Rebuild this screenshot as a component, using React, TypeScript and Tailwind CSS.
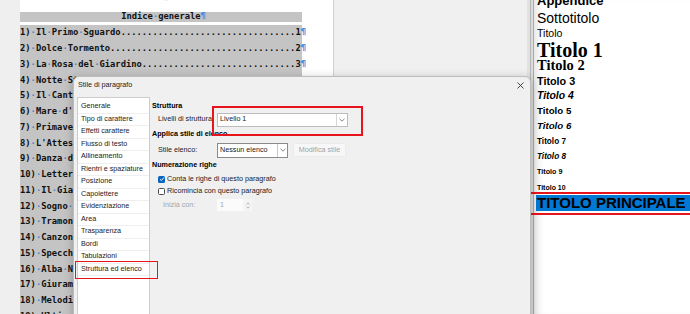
import React from "react";

const rows: [string, string, string][] = [
  ["1)", "Il Primo Sguardo", "1"],
  ["2)", "Dolce Tormento", "2"],
  ["3)", "La Rosa del Giardino", "3"],
  ["4)", "Notte Stellata", "4"],
  ["5)", "Il Canto del Vento", "5"],
  ["6)", "Mare d'Inverno", "6"],
  ["7)", "Primavera", "7"],
  ["8)", "L'Attesa", "8"],
  ["9)", "Danza di Luce", "9"],
  ["10)", "Lettera d'Amore", "10"],
  ["11)", "Il Giardino Segreto", "11"],
  ["12)", "Sogno Lontano", "12"],
  ["13)", "Tramonto", "13"],
  ["14)", "Canzone Antica", "14"],
  ["15)", "Specchio d'Acqua", "15"],
  ["16)", "Alba Nuova", "16"],
  ["17)", "Giuramento", "17"],
  ["18)", "Melodia", "18"],
  ["19)", "Ultimo Addio", "19"],
];

function Marked({ text }: { text: string }) {
  return (
    <>
      {text.split("").map((c, i) =>
        c === " " ? (
          <span key={i} className="text-[#4a86c8]">
            ·
          </span>
        ) : (
          <span key={i}>{c}</span>
        )
      )}
    </>
  );
}

function IndexRow({ n, title, page }: { n: string; title: string; page: string }) {
  const left = `${n} ${title}`;
  const dots = ".".repeat(Math.max(0, 53 - left.length - page.length));
  return (
    <div className="h-[15.75px] shrink-0 bg-[#c4c4c4] flex items-center whitespace-pre">
      <Marked text={left} />
      <span>{dots}</span>
      <span>{page}</span>
      <span className="text-[#3b8fe0]">¶</span>
    </div>
  );
}

function Chevron() {
  return (
    <svg width="6" height="4" viewBox="0 0 6 4">
      <polyline points="0.5,0.8 3,3.2 5.5,0.8" fill="none" stroke="#6b6b6b" strokeWidth="0.8" />
    </svg>
  );
}

const navItems = [
  "Generale",
  "Tipo di carattere",
  "Effetti carattere",
  "Flusso di testo",
  "Allineamento",
  "Rientri e spaziature",
  "Posizione",
  "Capolettere",
  "Evidenziazione",
  "Area",
  "Trasparenza",
  "Bordi",
  "Tabulazioni",
  "Struttura ed elenco",
];

export default function App() {
  return (
    <div className="relative w-[690px] h-[314px] overflow-hidden bg-[#f0f0f0] flex">
      {/* left strip */}
      <div className="w-[20px] shrink-0 bg-[#efefef]" />
      {/* page */}
      <div className="w-[313px] shrink-0 bg-white flex [font-family:'DejaVu_Sans_Mono',monospace] font-bold text-[8.8px] text-[#111]">
        <div className="w-[282px] flex flex-col">
          <div className="h-[12px] shrink-0 overflow-hidden flex justify-center">
            <span className="-mt-[9px] ml-[9px] leading-[12px] text-[#3b8fe0]">¶</span>
          </div>
          <div className="h-[10px] shrink-0 bg-[#c4c4c4] flex items-center justify-center whitespace-pre pl-[5px]">
            <Marked text="Indice generale" />
            <span className="text-[#3b8fe0]">¶</span>
          </div>
          <div className="h-[3px] shrink-0" />
          {rows.map(([n, t, p]) => (
            <IndexRow key={n} n={n} title={t} page={p} />
          ))}
        </div>
      </div>
      <div className="w-[1px] shrink-0 bg-[#d2d2d2]" />
      <div className="w-[193px] shrink-0 bg-[#f0f0f0]" />
      {/* splitter */}
      <div className="w-[7px] shrink-0 flex">
        <div className="w-[3px] bg-[#e2e2e2]" />
        <div className="w-[1px] bg-[#b4b4b4]" />
        <div className="w-[2px] bg-[#dcdcdc]" />
        <div className="w-[1px] bg-[#a9a9a9]" />
      </div>
      {/* sidebar */}
      <div className="flex-1 bg-white shadow-[inset_8px_0_10px_-6px_rgba(0,0,0,0.14)] overflow-hidden text-black [font-family:'Liberation_Sans',Arial,sans-serif]">
        <div className="-mt-[9px] flex flex-col whitespace-nowrap">
          <div className="h-[18.5px] shrink-0 flex items-center pl-[3px] text-[13px] font-bold">Appendice</div>
          <div className="h-[17px] shrink-0 flex items-center pl-[3px] text-[14px]">Sottotitolo</div>
          <div className="h-[15.5px] shrink-0 flex items-center pl-[3px] text-[10.6px]">Titolo</div>
          <div className="h-[15.75px] shrink-0 flex items-center pl-[3px] text-[20px] font-bold [font-family:'Liberation_Serif','Times_New_Roman',serif]">Titolo 1</div>
          <div className="h-[15.25px] shrink-0 flex items-center pl-[3px] text-[14.5px] font-bold [font-family:'Liberation_Serif','Times_New_Roman',serif]">Titolo 2</div>
          <div className="h-[15.25px] shrink-0 flex items-center pl-[3px] text-[10.8px] font-bold">Titolo 3</div>
          <div className="h-[15.25px] shrink-0 flex items-center pl-[3px] text-[10.4px] font-bold italic">Titolo 4</div>
          <div className="h-[15.5px] shrink-0 flex items-center pl-[3px] text-[9.7px] font-bold">Titolo 5</div>
          <div className="h-[15.5px] shrink-0 flex items-center pl-[3px] text-[9.7px] font-bold italic">Titolo 6</div>
          <div className="h-[15px] shrink-0 flex items-center pl-[3px] text-[8.2px] font-bold">Titolo 7</div>
          <div className="h-[15.5px] shrink-0 flex items-center pl-[3px] text-[8.2px] font-bold italic">Titolo 8</div>
          <div className="h-[15.5px] shrink-0 flex items-center pl-[3px] text-[7.2px] font-bold">Titolo 9</div>
          <div className="h-[14.5px] shrink-0 flex items-center pl-[3px] text-[7px] font-bold">Titolo 10</div>
          <div className="h-[16px] shrink-0 ml-[2px] pl-[1px] flex items-center bg-[#0078d4] text-[15px] font-bold">TITOLO PRINCIPALE</div>
        </div>
      </div>

      {/* red box on sidebar */}
      <div className="absolute left-[526px] top-[192px] w-[170px] h-[23px] border-2 border-[#e8141c]" />

      {/* dialog */}
      <div className="absolute left-[73px] top-[76px] w-[458px] h-[250px] bg-[#f0f0f0] border border-[#bdbdbd] rounded-t-[6px] shadow-[0_2px_10px_rgba(0,0,0,0.25)] [font-family:'Liberation_Sans',Arial,sans-serif] text-[7.2px] text-[#1b1b1b]">
        <div className="h-[16px] flex items-center justify-between pl-[4px] pr-[6px]">
          <span>Stile di paragrafo</span>
          <svg width="7" height="7" viewBox="0 0 7 7">
            <path d="M0.5 0.5 L6.5 6.5 M6.5 0.5 L0.5 6.5" stroke="#333" strokeWidth="0.9" />
          </svg>
        </div>
        <div className="mt-[4px] flex">
          <div className="ml-[3px] w-[73px] h-[230px] bg-white border border-[#cdcdcd] pt-[3px] flex flex-col">
            {navItems.map((it) => (
              <div key={it} className="h-[12.5px] shrink-0 border-b border-[#efefef] flex items-center pl-[3px] whitespace-nowrap">
                {it}
              </div>
            ))}
          </div>
          <div className="ml-[2px] flex-1 pt-[3px] flex flex-col">
            <div className="h-[12px] flex items-center font-bold text-black">Struttura</div>
            <div className="h-[15px] flex items-center pl-[6px]">
              <span className="w-[59px] whitespace-nowrap">Livelli di struttura:</span>
              <div className="w-[131px] h-[14px] bg-white border border-[#bcbcbc] flex items-center justify-between pl-[2px]">
                <span>Livello 1</span>
                <div className="w-[11px] h-full border-l border-[#d6d6d6] flex items-center justify-center">
                  <Chevron />
                </div>
              </div>
            </div>
            <div className="h-[14px] flex items-center font-bold text-black">Applica stile di elenco</div>
            <div className="mt-[1px] h-[16px] flex items-center pl-[6px]">
              <span className="w-[59px] whitespace-nowrap">Stile elenco:</span>
              <div className="w-[71px] h-[15px] bg-white border border-[#8a8a8a] flex items-center justify-between pl-[2px]">
                <span>Nessun elenco</span>
                <div className="w-[10px] h-full border-l border-[#c8c8c8] flex items-center justify-center">
                  <Chevron />
                </div>
              </div>
              <div className="ml-[5px] w-[53px] h-[14px] bg-[#f7f7f7] border border-[#ececec] flex items-center justify-center text-[#a3a3a3]">
                Modifica stile
              </div>
            </div>
            <div className="h-[15px] flex items-center font-bold text-black">Numerazione righe</div>
            <div className="h-[12px] flex items-center pl-[6px] gap-[2px]">
              <div className="w-[7px] h-[7px] rounded-[1.5px] bg-[#0a64c0] flex items-center justify-center">
                <svg width="6" height="6" viewBox="0 0 6 6">
                  <polyline points="1,3.2 2.4,4.5 5,1.5" fill="none" stroke="white" strokeWidth="0.9" />
                </svg>
              </div>
              <span>Conta le righe di questo paragrafo</span>
            </div>
            <div className="h-[12px] flex items-center pl-[6px] gap-[2px]">
              <div className="w-[7px] h-[7px] rounded-[1.5px] bg-white border border-[#4a4a4a]" />
              <span>Ricomincia con questo paragrafo</span>
            </div>
            <div className="mt-[2px] h-[12px] flex items-center pl-[11px] text-[#a6a6a6]">
              <span className="w-[54px]">Inizia con:</span>
              <div className="w-[26px] h-[12px] bg-[#fbfbfb] flex items-center pl-[3px]">1</div>
              <div className="w-[9px] h-[12px] bg-[#f4f4f4] flex flex-col items-center justify-center gap-[1px]">
                <svg width="4" height="3" viewBox="0 0 4 3">
                  <polyline points="0.5,2.5 2,0.8 3.5,2.5" fill="none" stroke="#9a9a9a" strokeWidth="0.7" />
                </svg>
                <svg width="4" height="3" viewBox="0 0 4 3">
                  <polyline points="0.5,0.5 2,2.2 3.5,0.5" fill="none" stroke="#9a9a9a" strokeWidth="0.7" />
                </svg>
              </div>
            </div>
          </div>
        </div>

        {/* red boxes inside dialog */}
        <div className="absolute left-[138px] top-[29px] w-[151px] h-[30px] border-2 border-[#e8141c]" />
        <div className="absolute left-[1px] top-[184px] w-[83px] h-[18px] border-[1.5px] border-[#e8141c]" />
      </div>
    </div>
  );
}
